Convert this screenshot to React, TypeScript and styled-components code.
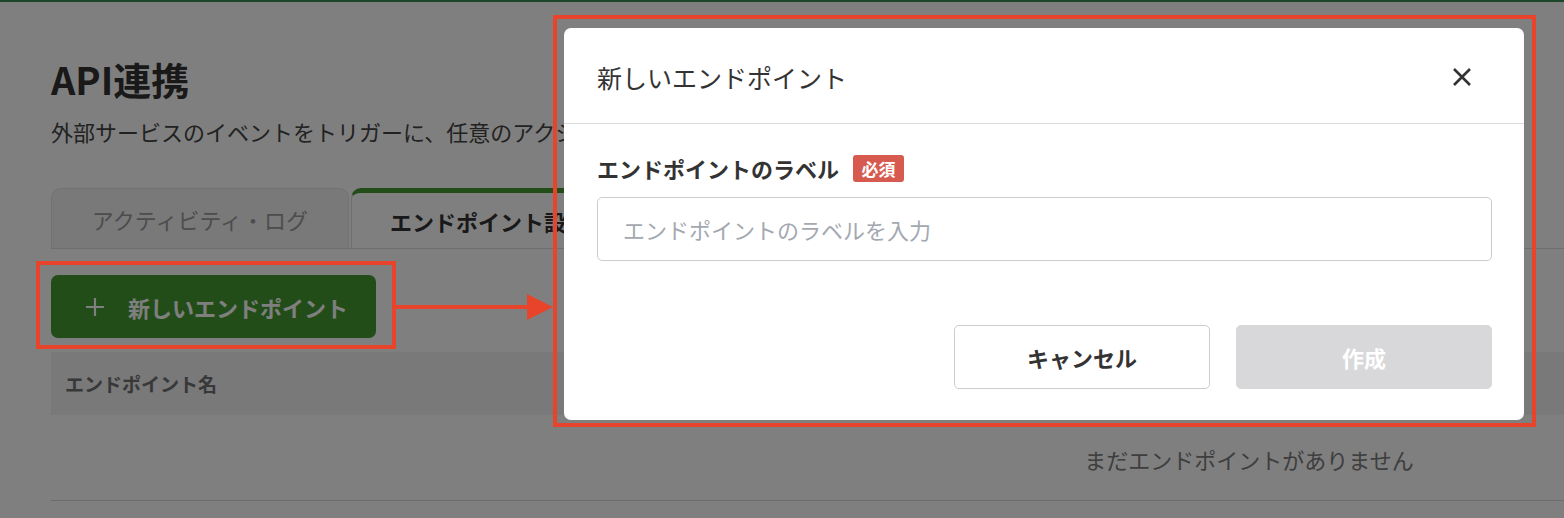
import React from "react";
import styled, { createGlobalStyle } from "styled-components";

const GlobalStyle = createGlobalStyle`
  html, body {
    margin: 0;
    padding: 0;
    background: #ffffff;
    overflow: hidden;
  }
  body {
    font-family: "Noto Sans CJK JP", "Noto Sans", sans-serif;
    color: #333333;
  }
  * {
    box-sizing: border-box;
  }
`;

const green = "#449a31";
const red = "#e8432b";

const Page = styled.div`
  position: relative;
  width: 1564px;
  height: 518px;
  overflow: hidden;
`;

const TopLine = styled.div`
  height: 2px;
  background: #3a8a50;
`;

const Main = styled.main`
  width: 2447px;
  padding: 53px 0 0 51px;
`;

const Title = styled.h1`
  margin: 0;
  font-size: 38px;
  line-height: 48px;
  font-weight: 700;
  color: #333333;
`;

const Subtitle = styled.p`
  margin: 12px 0 0;
  font-size: 22px;
  line-height: 32px;
  color: #444444;
  white-space: nowrap;
`;

const TabBar = styled.div`
  display: flex;
  gap: 2px;
  margin-top: 41px;
  border-bottom: 1px solid #dddddd;
`;

const Tab = styled.div<{ $active?: boolean }>`
  height: 60px;
  padding: 0 38px;
  display: flex;
  align-items: center;
  justify-content: center;
  white-space: nowrap;
  font-size: 22px;
  border-radius: 10px 10px 0 0;
  border: 1px solid ${(p) => (p.$active ? "#dddddd" : "#e4e4e6")};
  border-top: ${(p) => (p.$active ? `5px solid ${green}` : "1px solid #e4e4e6")};
  border-bottom: none;
  background: ${(p) => (p.$active ? "#ffffff" : "#f3f3f5")};
  color: ${(p) => (p.$active ? "#333333" : "#9a9a9a")};
  font-weight: ${(p) => (p.$active ? 700 : 400)};
  width: ${(p) => (p.$active ? "auto" : "298px")};
`;

const Toolbar = styled.div`
  padding: 26px 0 14px;
`;

const PrimaryButton = styled.button`
  display: inline-flex;
  align-items: center;
  gap: 23px;
  height: 63px;
  padding: 0 28px 0 34px;
  border: none;
  border-radius: 7px;
  background: ${green};
  color: #ffffff;
  font-family: inherit;
  font-size: 22px;
  font-weight: 700;
`;

const Table = styled.div`
  width: 100%;
  border-bottom: 1px solid #d8d8d8;
`;

const HeaderRow = styled.div`
  height: 63px;
  display: flex;
  align-items: center;
  padding-left: 14px;
  background: #f2f2f5;
  font-size: 19px;
  font-weight: 700;
  color: #707070;
`;

const EmptyRow = styled.div`
  height: 85px;
  display: flex;
  align-items: center;
  justify-content: center;
  padding-top: 2px;
  font-size: 22px;
  color: #7c7c7c;
`;

const Overlay = styled.div`
  position: absolute;
  inset: 0;
  background: rgba(0, 0, 0, 0.5);
`;

const Modal = styled.div`
  position: absolute;
  left: 564px;
  top: 28px;
  width: 960px;
  height: 392px;
  background: #ffffff;
  border-radius: 7px;
  display: flex;
  flex-direction: column;
`;

const ModalHeader = styled.div`
  height: 96px;
  display: flex;
  align-items: center;
  justify-content: space-between;
  padding: 2px 52px 0 33px;
  border-bottom: 1px solid #dcdcdc;
`;

const ModalTitle = styled.h2`
  margin: 0;
  font-size: 25px;
  font-weight: 400;
  color: #333333;
`;

const CloseButton = styled.button`
  display: flex;
  padding: 0;
  border: none;
  background: none;
`;

const ModalBody = styled.div`
  padding: 26px 32px 0 33px;
`;

const LabelRow = styled.div`
  display: flex;
  align-items: center;
  gap: 14px;
  height: 36px;
`;

const Label = styled.label`
  font-size: 22px;
  font-weight: 700;
  color: #333333;
`;

const Badge = styled.span`
  display: inline-flex;
  align-items: center;
  justify-content: center;
  width: 51px;
  height: 27px;
  border-radius: 3px;
  background: #d65b4e;
  color: #ffffff;
  font-size: 17px;
  font-weight: 700;
`;

const TextInput = styled.input`
  display: block;
  width: 100%;
  height: 64px;
  margin-top: 11px;
  padding: 0 25px;
  border: 1px solid #cccccc;
  border-radius: 5px;
  font-family: inherit;
  font-size: 22px;
  color: #333333;
  outline: none;

  &::placeholder {
    color: #a3a8b0;
  }
`;

const ModalFooter = styled.div`
  display: flex;
  justify-content: flex-end;
  gap: 26px;
  padding: 64px 32px 0;
`;

const FooterButton = styled.button<{ $disabled?: boolean }>`
  width: 256px;
  height: 64px;
  border-radius: 5px;
  border: 1px solid ${(p) => (p.$disabled ? "#d8d8da" : "#cccccc")};
  background: ${(p) => (p.$disabled ? "#d8d8da" : "#ffffff")};
  color: ${(p) => (p.$disabled ? "#ffffff" : "#333333")};
  font-family: inherit;
  font-size: 22px;
  font-weight: 700;
`;

const Highlight = styled.div<{ $x: number; $y: number; $w: number; $h: number }>`
  position: absolute;
  left: ${(p) => p.$x}px;
  top: ${(p) => p.$y}px;
  width: ${(p) => p.$w}px;
  height: ${(p) => p.$h}px;
  border: 4px solid ${red};
  pointer-events: none;
`;

const Arrow = styled.svg`
  position: absolute;
  left: 395px;
  top: 294px;
`;

const PlusIcon = () => (
  <svg width="20" height="20" viewBox="0 0 20 20" fill="none">
    <path d="M10 1v18M1 10h18" stroke="#ffffff" strokeWidth="2.2" />
  </svg>
);

const CloseIcon = () => (
  <svg width="20" height="20" viewBox="0 0 20 20" fill="none">
    <path d="M2 2l16 16M18 2L2 18" stroke="#333333" strokeWidth="2.6" />
  </svg>
);

const App = () => {
  return (
    <>
      <GlobalStyle />
      <Page>
        <TopLine />
        <Main>
          <Title>API連携</Title>
          <Subtitle>
            外部サービスのイベントをトリガーに、任意のアクションを実行するエンドポイントを作成できます
          </Subtitle>
          <TabBar>
            <Tab>アクティビティ・ログ</Tab>
            <Tab $active>エンドポイント設定</Tab>
          </TabBar>
          <Toolbar>
            <PrimaryButton>
              <PlusIcon />
              新しいエンドポイント
            </PrimaryButton>
          </Toolbar>
          <Table>
            <HeaderRow>エンドポイント名</HeaderRow>
            <EmptyRow>まだエンドポイントがありません</EmptyRow>
          </Table>
        </Main>

        <Overlay />

        <Modal role="dialog">
          <ModalHeader>
            <ModalTitle>新しいエンドポイント</ModalTitle>
            <CloseButton aria-label="閉じる">
              <CloseIcon />
            </CloseButton>
          </ModalHeader>
          <ModalBody>
            <LabelRow>
              <Label>エンドポイントのラベル</Label>
              <Badge>必須</Badge>
            </LabelRow>
            <TextInput placeholder="エンドポイントのラベルを入力" />
          </ModalBody>
          <ModalFooter>
            <FooterButton>キャンセル</FooterButton>
            <FooterButton $disabled>作成</FooterButton>
          </ModalFooter>
        </Modal>

        <Highlight $x={36} $y={261} $w={360} $h={88} />
        <Highlight $x={553} $y={15} $w={983} $h={412} />
        <Arrow width="160" height="26" viewBox="0 0 160 26">
          <path d="M0 13h135" stroke={red} strokeWidth="4" />
          <path d="M132 0l26 13-26 13z" fill={red} />
        </Arrow>
      </Page>
    </>
  );
};

export default App;
